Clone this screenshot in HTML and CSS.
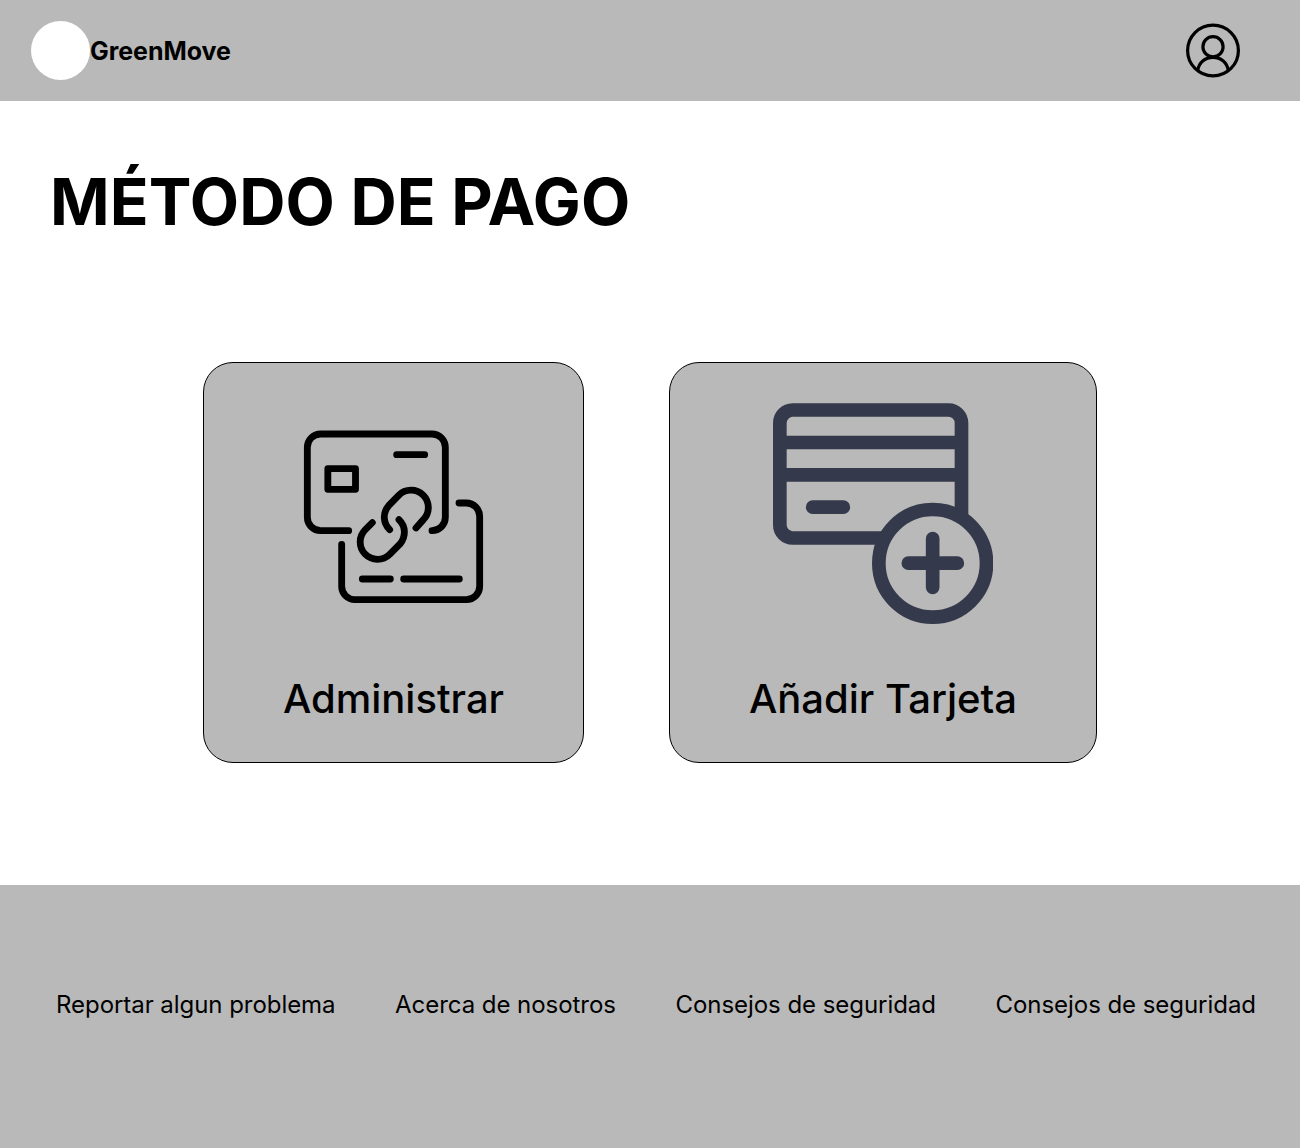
FILE: index.html
```html
<!DOCTYPE html>
<html lang="es">
<head>
<meta charset="utf-8">
<title>GreenMove - Método de pago</title>
<link rel="stylesheet" href="styles.css">
</head>
<body>
<header class="topbar">
  <div class="brand"><span class="brand-logo"></span><span class="brand-name">GreenMove</span></div>
  <svg class="user-icon" viewBox="0 0 54 55" fill="none" stroke="#000" stroke-width="3.200">
    <circle cx="27" cy="27.500" r="25.400"/>
    <circle cx="27" cy="23.700" r="10.100"/>
    <path d="M11.700 47.500C13 39 19.500 34.300 27 34.300S41 39 42.300 47.500"/>
  </svg>
</header>
<main class="content">
  <h1 class="title">MÉTODO DE PAGO</h1>
  <div class="cards">
    <a class="card card-manage">
      <svg class="icon-manage" viewBox="9 0 663 690" fill="none" stroke="#000" stroke-width="20.500" stroke-linecap="round">
        <path d="M206 392H122A40 40 0 0 1 82 352V142A40 40 0 0 1 122 102H456A40 40 0 0 1 496 142V352A40 40 0 0 1 456 392"/>
        <path d="M537 309H559A40 40 0 0 1 599 349V559A40 40 0 0 1 559 599H226A40 40 0 0 1 185 559V433"/>
        <path d="M350 164H434M247 537H331M371 537H538"/>
        <rect x="143.500" y="206" width="83" height="62" stroke-linejoin="round"/>
        <path d="M329 389C308 368 308 338 326 317L356 286A50 50 0 0 1 430 359L408 384"/>
        <path d="M357 359C378 379 378 410 360 432L329 463A50 50 0 0 1 256 389L277 368"/>
      </svg>
      <span class="card-label">Administrar</span>
    </a>
    <a class="card card-add">
      <svg class="icon-add" viewBox="39 39 660 663" fill="none" stroke="#343a4b" stroke-width="41" stroke-linecap="round">
        <path d="M366 444H98A39 39 0 0 1 59.500 405V99A39 39 0 0 1 98 60H565A39 39 0 0 1 604.500 99V376" stroke-linecap="butt"/>
        <path d="M60 157.500H604M60 254.500H604" stroke-linecap="butt"/>
        <path d="M158 351.500H250M445 519.500H592M518 446V592"/>
        <circle cx="518" cy="520" r="161.500"/>
      </svg>
      <span class="card-label">Añadir Tarjeta</span>
    </a>
  </div>
</main>
<footer class="footer">
  <a>Reportar algun problema</a>
  <a>Acerca de nosotros</a>
  <a>Consejos de seguridad</a>
  <a>Consejos de seguridad</a>
</footer>
</body>
</html>
```
FILE: styles.css
```css
* { box-sizing: border-box; }
body {
  margin: 0;
  min-height: 1148px;
  display: flex;
  flex-direction: column;
  background: #fff;
  color: #000;
  font-family: Inter, "Liberation Sans", sans-serif;
}
.topbar {
  height: 101px;
  padding: 0 60px 0 31px;
  display: flex;
  align-items: center;
  justify-content: space-between;
  background: #b9b9b9;
}
.brand { display: flex; align-items: center; }
.brand-logo { width: 59px; height: 59px; border-radius: 50%; background: #fff; }
.brand-name { font-size: 25px; line-height: 30px; font-weight: 700; letter-spacing: -0.05px; }
.user-icon { width: 54px; height: 55px; }
.content { height: 784px; }
.title {
  margin: 0;
  padding: 62px 0 0 50px;
  font-size: 64px;
  line-height: 77px;
  font-weight: 700;
  letter-spacing: 0.17px;
}
.cards {
  display: flex;
  justify-content: center;
  gap: 85px;
  margin-top: 122px;
}
.card {
  height: 401px;
  display: flex;
  flex-direction: column;
  align-items: center;
  justify-content: space-between;
  padding-bottom: 39px;
  border: 1px solid #000;
  border-radius: 30px;
  background: #b9b9b9;
}
.card-manage { width: 381px; padding-top: 37px; }
.card-add { width: 428px; padding-top: 40px; }
.icon-manage { width: 221px; height: 230px; }
.icon-add { width: 220px; height: 221px; }
.card-label { font-size: 40px; line-height: 48px; font-weight: 500; }
.footer {
  height: 263px;
  padding: 0 44px 24px 56px;
  display: flex;
  align-items: center;
  justify-content: space-between;
  background: #b9b9b9;
  font-size: 24px;
  line-height: 29px;
  letter-spacing: -0.05px;
  white-space: nowrap;
}
```
